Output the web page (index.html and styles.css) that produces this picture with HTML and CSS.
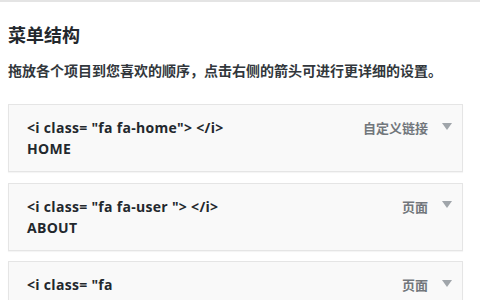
FILE: index.html
```html
<!DOCTYPE html>
<html lang="zh-CN">
<head>
<meta charset="utf-8">
<title>菜单结构</title>
<link rel="stylesheet" href="styles.css">
</head>
<body>
<div class="topline"></div>
<main class="page">
  <h2 class="title">菜单结构</h2>
  <p class="desc">拖放各个项目到您喜欢的顺序，点击右侧的箭头可进行更详细的设置。</p>
  <ul class="menu">
    <li class="item">
      <div class="item-title">&lt;i class= "fa fa-home"&gt; &lt;/i&gt; HOME</div>
      <div class="item-controls"><span class="item-type">自定义链接</span><span class="arrow"></span></div>
    </li>
    <li class="item">
      <div class="item-title">&lt;i class= "fa fa-user "&gt; &lt;/i&gt; ABOUT</div>
      <div class="item-controls"><span class="item-type">页面</span><span class="arrow"></span></div>
    </li>
    <li class="item">
      <div class="item-title">&lt;i class= "fa <span class="nowrap">fa-paper-plane-o"&gt;</span> &lt;/i&gt; CONTACT</div>
      <div class="item-controls"><span class="item-type">页面</span><span class="arrow"></span></div>
    </li>
  </ul>
</main>
</body>
</html>
```
FILE: styles.css
```css
html, body {
  margin: 0;
  padding: 0;
  background: #ffffff;
  overflow: hidden;
  height: 300px;
}
body {
  font-family: "Open Sans", "Noto Sans CJK SC", sans-serif;
  color: #23282d;
}
.topline {
  height: 2px;
  background: #e4e4e4;
}
.page {
  padding: 0 8px;
}
.title {
  margin: 20px 0 0;
  font-family: "Noto Sans CJK SC", sans-serif;
  font-size: 18px;
  line-height: 24px;
  font-weight: 700;
  color: #23282d;
}
.desc {
  margin: 14px 0 0;
  font-family: "Noto Sans CJK SC", sans-serif;
  font-size: 14px;
  line-height: 20px;
  font-weight: 700;
  color: #32373c;
}
.menu {
  list-style: none;
  margin: 24px 0 0;
  padding: 0;
  width: 455px;
  display: flex;
  flex-direction: column;
  gap: 10.5px;
}
.item {
  box-sizing: border-box;
  min-height: 68px;
  display: flex;
  justify-content: space-between;
  align-items: flex-start;
  padding: 12px 10px 12px 18px;
  background: #f9f9f9;
  border: 1px solid #e5e5e5;
  box-shadow: 0 1px 1px rgba(0, 0, 0, 0.04);
}
.item-title {
  width: 215px;
  font-size: 14px;
  line-height: 21px;
  font-weight: 700;
  letter-spacing: 0.3px;
  color: #23282d;
}
.nowrap {
  white-space: nowrap;
}
.item-controls {
  display: flex;
  align-items: center;
  height: 21px;
  gap: 14px;
}
.item-type {
  font-family: "Noto Sans CJK SC", sans-serif;
  font-size: 13px;
  font-weight: 700;
  color: #72777c;
}
.arrow {
  width: 0;
  height: 0;
  border-left: 5px solid transparent;
  border-right: 5px solid transparent;
  border-top: 7px solid #a0a5aa;
  margin-top: -3px;
}
```
